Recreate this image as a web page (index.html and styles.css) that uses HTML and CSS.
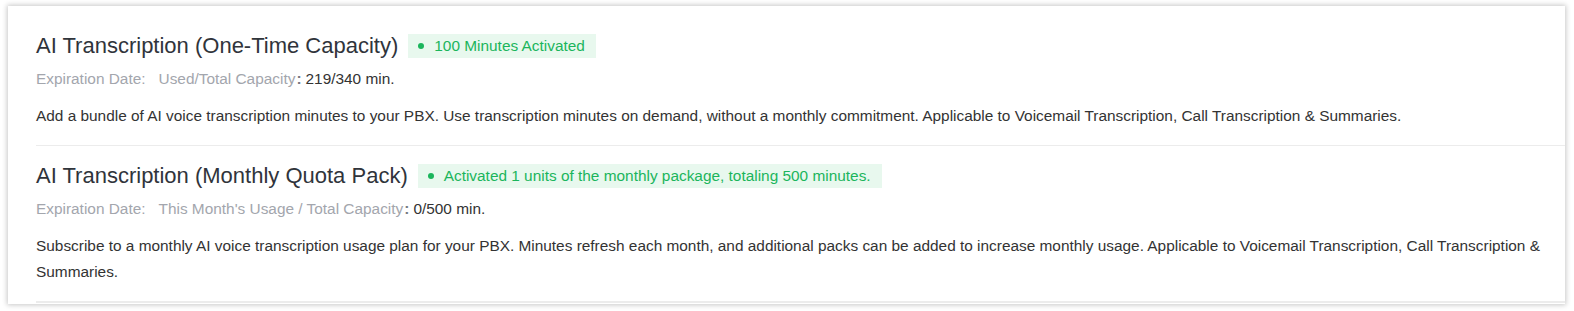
FILE: index.html
```html
<!DOCTYPE html>
<html>
<head>
<meta charset="utf-8">
<link rel="stylesheet" href="styles.css">
</head>
<body>
<div class="card">
  <div class="section">
    <div class="title-row">
      <span class="title">AI Transcription (One-Time Capacity)</span>
      <span class="badge"><span class="dot"></span>100 Minutes Activated</span>
    </div>
    <div class="meta">
      <span class="label">Expiration Date:</span><span class="label label-gap">Used/Total Capacity</span><span class="colon">:</span><span class="value">219/340 min.</span>
    </div>
    <p class="desc">Add a bundle of AI voice transcription minutes to your PBX. Use transcription minutes on demand, without a monthly commitment. Applicable to Voicemail Transcription, Call Transcription &amp; Summaries.</p>
  </div>
  <div class="section">
    <div class="title-row">
      <span class="title">AI Transcription (Monthly Quota Pack)</span>
      <span class="badge"><span class="dot"></span>Activated 1 units of the monthly package, totaling 500 minutes.</span>
    </div>
    <div class="meta">
      <span class="label">Expiration Date:</span><span class="label label-gap">This Month's Usage / Total Capacity</span><span class="colon">:</span><span class="value">0/500 min.</span>
    </div>
    <p class="desc">Subscribe to a monthly AI voice transcription usage plan for your PBX. Minutes refresh each month, and additional packs can be added to increase monthly usage. Applicable to Voicemail Transcription, Call Transcription &amp; Summaries.</p>
  </div>
</div>
</body>
</html>
```

FILE: styles.css
```css
html, body {
  margin: 0;
  padding: 0;
  background: #ffffff;
  overflow: hidden;
}
body {
  height: 311px;
  font-family: "Liberation Sans", Arial, sans-serif;
  color: #333333;
}
.card {
  margin: 6px 0 0 8px;
  width: 1557px;
  height: 298px;
  background: #ffffff;
  box-shadow: 0 0 5px 1px rgba(0, 0, 0, 0.22);
  padding: 10px 0 0 28px;
  box-sizing: border-box;
  overflow: hidden;
}
.section {
  padding-top: 18px;
  padding-bottom: 16px;
  border-bottom: 1px solid #ececec;
  width: 1540px;
}
.section + .section {
  border-bottom: 2px solid #ececec;
}
.title-row {
  display: flex;
  align-items: center;
  height: 24px;
}
.title {
  font-size: 22px;
  line-height: 24px;
  color: #30343b;
  margin-right: 10px;
  white-space: nowrap;
}
.badge {
  display: inline-flex;
  align-items: center;
  height: 24px;
  padding: 0 11px 0 10px;
  background: #e8f8ee;
  color: #1bb55c;
  font-size: 15.4px;
  white-space: nowrap;
}
.dot {
  width: 6px;
  height: 6px;
  border-radius: 50%;
  background: #1bb55c;
  margin-right: 10px;
}
.meta {
  margin-top: 10px;
  height: 22px;
  line-height: 22px;
  font-size: 15.4px;
  white-space: nowrap;
}
.label {
  color: #a3a6ad;
}
.label-gap {
  margin-left: 13px;
}
.colon {
  color: #777a80;
  font-weight: bold;
  margin-left: 1px;
  margin-right: 4px;
}
.value {
  color: #333333;
}
.desc {
  margin: 13px 0 0 0;
  font-size: 15.4px;
  line-height: 26px;
  color: #333333;
  width: 1529px;
}
```
